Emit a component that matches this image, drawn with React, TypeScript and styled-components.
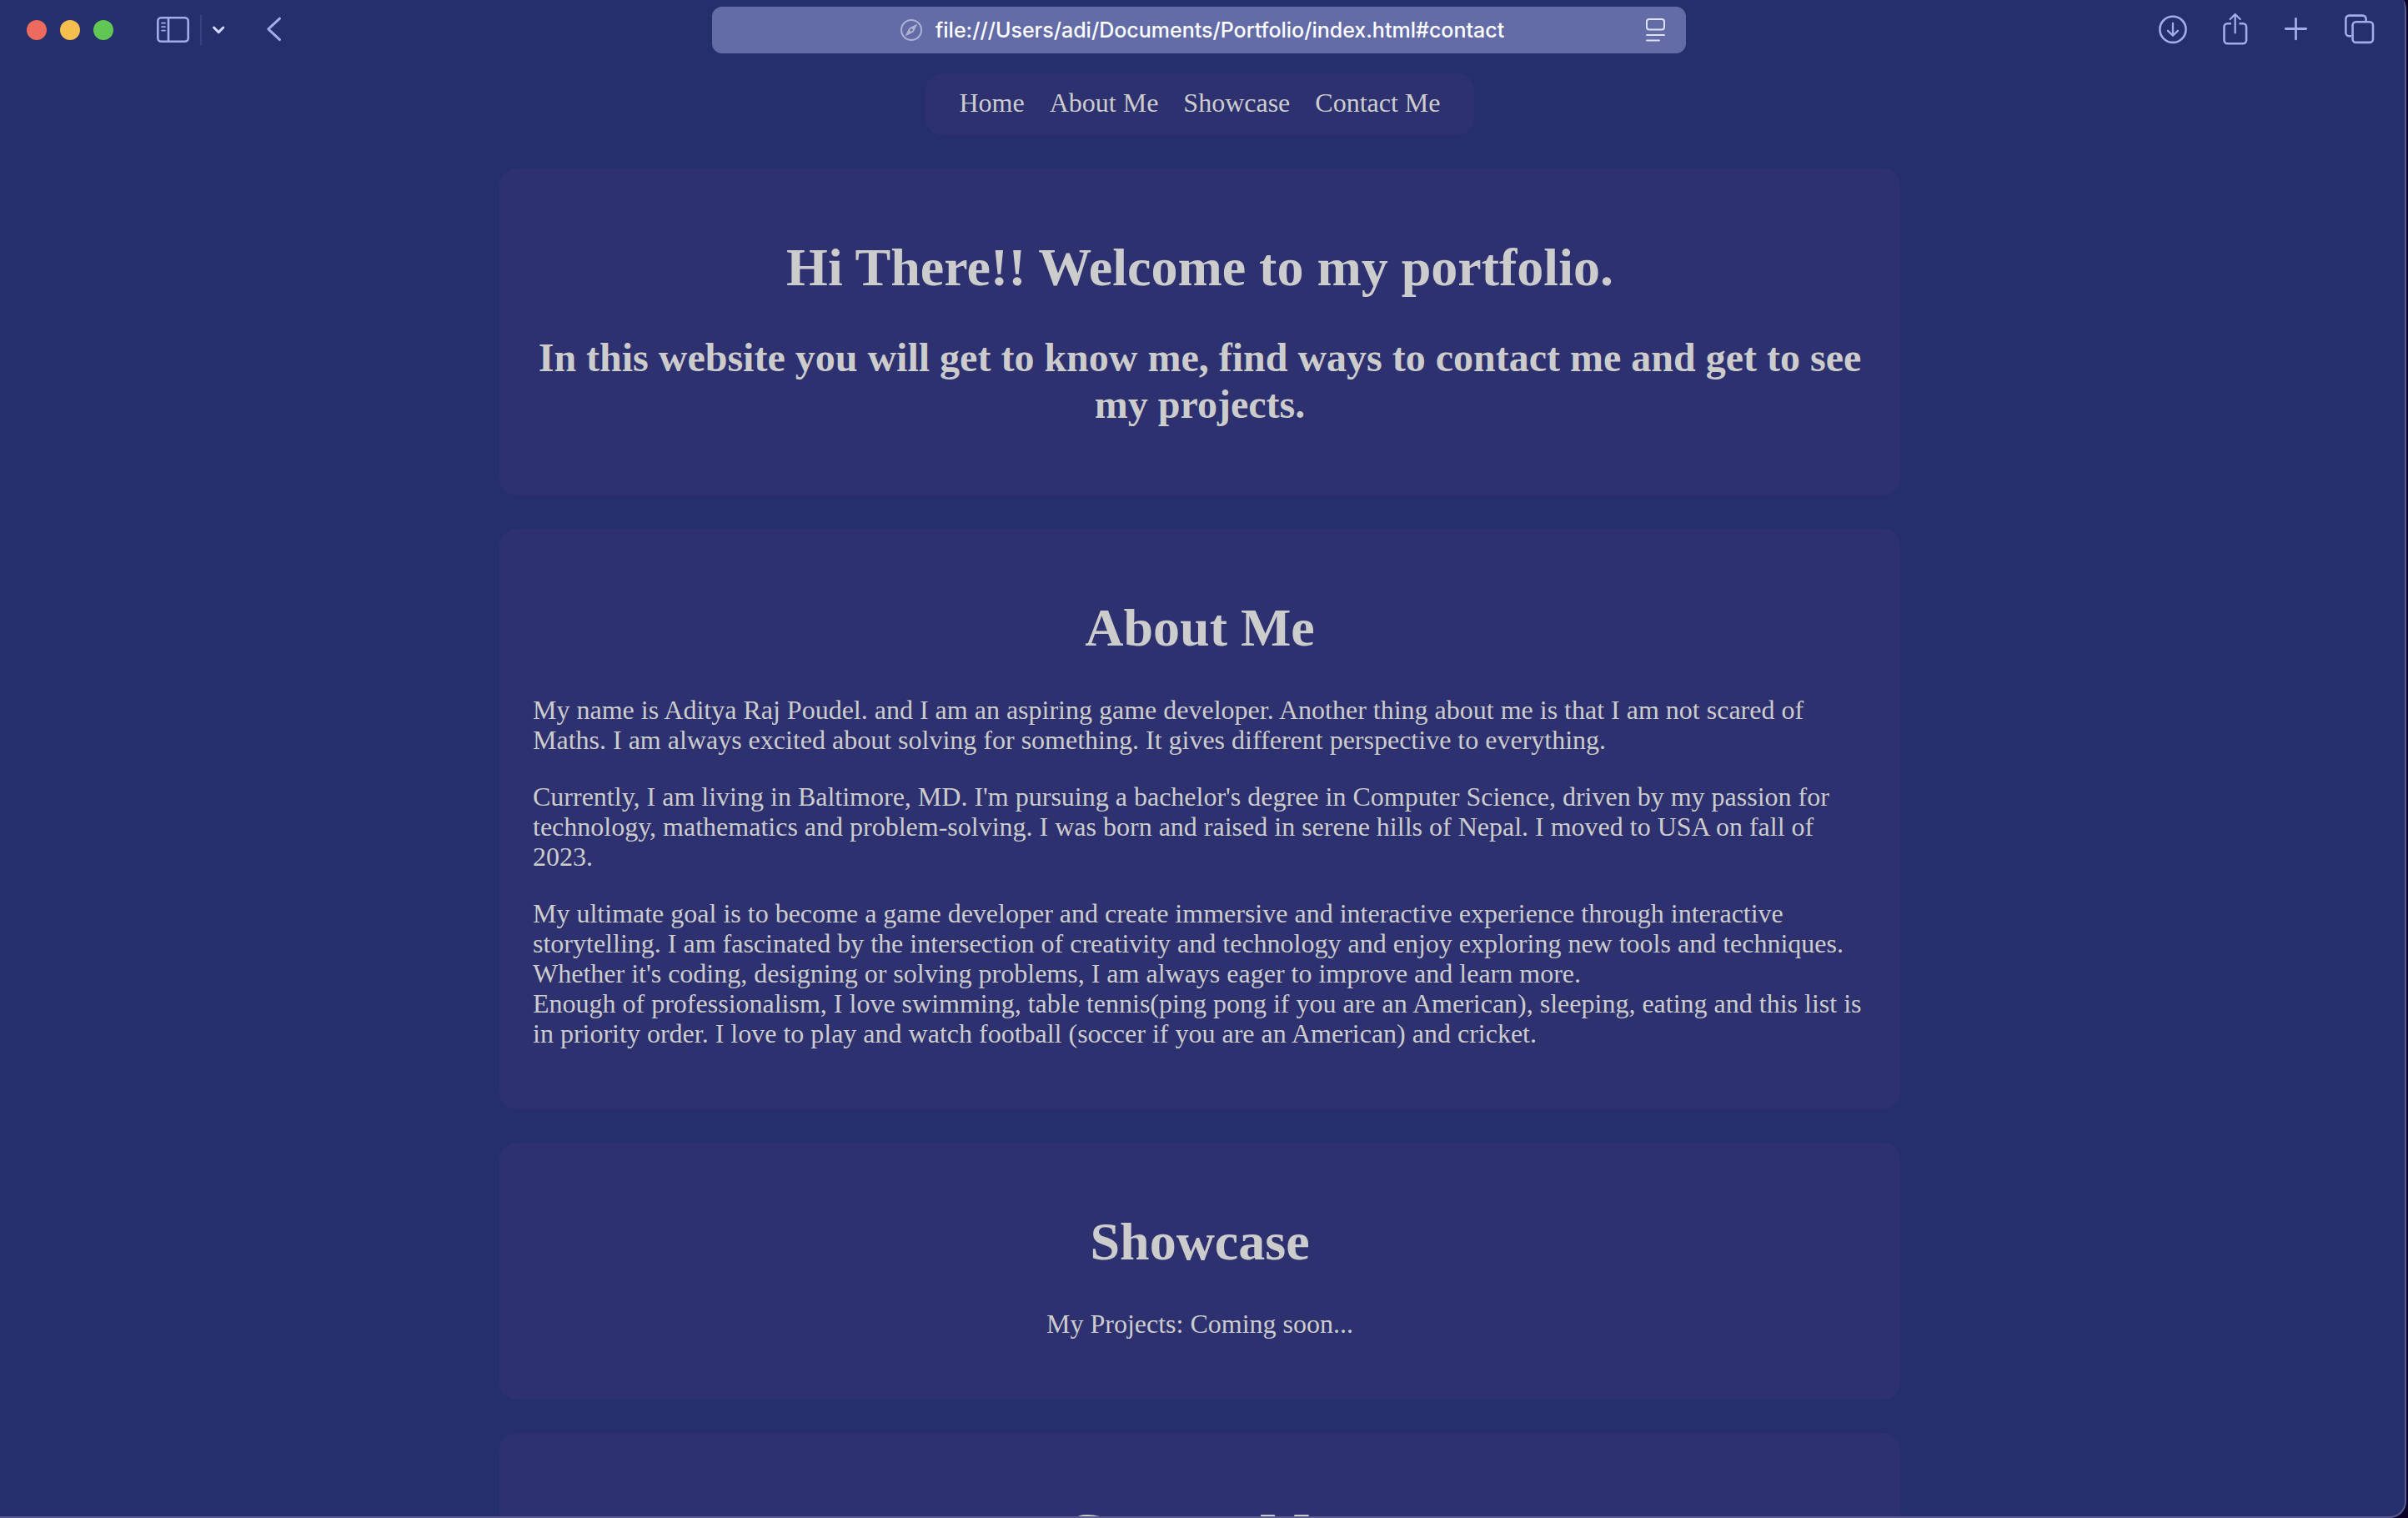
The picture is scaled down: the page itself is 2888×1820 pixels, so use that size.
import React from "react";
import styled, { createGlobalStyle } from "styled-components";

const colors = {
  desktop: "#0b0128",
  page: "#252f6b",
  card: "#2e3170",
  edge: "#5a5c8f",
  text: "#cccccc",
  icon: "#a3abe8",
  iconBright: "#d3d8ff",
  field: "#646ca8",
};

const GlobalStyle = createGlobalStyle`
  * { box-sizing: border-box; }
  html, body { margin: 0; background: ${colors.desktop}; }
`;

const Window = styled.div`
  display: flex;
  flex-direction: column;
  height: 100vh;
  margin-right: 2px;
  overflow: hidden;
  background: ${colors.page};
  border: solid ${colors.edge};
  border-width: 0 2px 2px 0;
  border-radius: 0 4px 20px 0 / 0 14px 20px 0;
`;

const Toolbar = styled.header`
  display: grid;
  grid-template-columns: 1fr minmax(0, 1168px) 1fr;
  align-items: center;
  flex: none;
  height: 72px;
  padding: 0 36px 0 28px;
`;

const LeftTools = styled.div`
  display: flex;
  align-items: center;
`;

const Lights = styled.div`
  display: flex;
  gap: 16px;
  margin: 0 52px 0 4px;
`;

const Light = styled.button<{ $color: string }>`
  width: 24px;
  height: 24px;
  padding: 0;
  border: 0;
  border-radius: 50%;
  background: ${(p) => p.$color};
`;

const Divider = styled.span`
  width: 2px;
  height: 36px;
  margin: 0 12px;
  background: #38417d;
`;

const ToolButton = styled.button<{ $width?: number; $bright?: boolean }>`
  display: block;
  flex: none;
  width: ${(p) => p.$width ?? 36}px;
  height: 40px;
  padding: 0;
  border: 0;
  background: none;
  color: ${(p) => (p.$bright ? colors.iconBright : colors.icon)};

  svg {
    display: block;
    width: 100%;
    height: 100%;
    overflow: visible;
    fill: none;
    stroke: currentColor;
    stroke-width: 2.6;
    stroke-linecap: round;
    stroke-linejoin: round;
  }
`;

const BackSlot = styled.div`
  margin-left: 48px;
`;

const RightTools = styled.div`
  display: flex;
  justify-content: flex-end;
  gap: 39px;
`;

const AddressBar = styled.div`
  display: grid;
  grid-template-columns: 56px minmax(0, 1fr) 48px;
  align-items: center;
  height: 56px;
  border-radius: 12px;
  background: ${colors.field};
`;

const Address = styled.label`
  grid-column: 2;
  display: flex;
  align-items: center;
  justify-content: center;
  gap: 16px;
  min-width: 0;
`;

const CompassIcon = styled.svg`
  flex: none;
  width: 26px;
  height: 26px;
  fill: none;
  stroke: #aeb3d6;
  stroke-width: 2;
`;

const AddressInput = styled.input`
  field-sizing: content;
  min-width: 0;
  padding: 0;
  border: 0;
  outline: 0;
  background: none;
  color: #ffffff;
  font: 500 25px/32px Inter, "Liberation Sans", sans-serif;
`;

const ReaderButton = styled.button`
  width: 24px;
  height: 28px;
  padding: 0;
  border: 0;
  background: none;

  svg {
    display: block;
    fill: none;
    stroke: #dfe1f1;
    stroke-width: 2;
    stroke-linecap: round;
  }
`;

const Page = styled.div`
  display: flex;
  flex: 1;
  flex-direction: column;
  align-items: center;
  gap: 40px;
  min-height: 0;
  padding: 16px 6px 40px 0;
  overflow-y: auto;
  scrollbar-width: none;
  color: ${colors.text};
  font-family: "Liberation Serif", "Times New Roman", serif;
  font-size: 32px;
  line-height: 36px;
`;

const Nav = styled.nav`
  display: flex;
  flex: none;
  gap: 30px;
  padding: 17px 40px 21px;
  border-radius: 20px;
  background: ${colors.card};
`;

const NavLink = styled.a`
  color: inherit;
  text-decoration: none;
`;

const Main = styled.main`
  display: flex;
  flex: none;
  flex-direction: column;
  gap: 40px;
  width: 100%;
  max-width: 1680px;
`;

const Card = styled.section<{ $centered?: boolean }>`
  display: flow-root;
  padding: 39px 40px 41px;
  border-radius: 20px;
  background: ${colors.card};
  text-align: ${(p) => (p.$centered ? "center" : "left")};
`;

const Title = styled.h1`
  margin: 43px 0;
  font-size: 64px;
  line-height: 74px;
  text-align: center;
`;

const Subtitle = styled.h2`
  margin: 40px 0;
  font-size: 48px;
  line-height: 56px;
`;

const Paragraph = styled.p`
  margin: 32px 0;
`;

export default function App() {
  return (
    <>
      <GlobalStyle />
      <Window>
        <Toolbar>
          <LeftTools>
            <Lights>
              <Light $color="#ec6a5e" aria-label="Close" />
              <Light $color="#f5bf4f" aria-label="Minimize" />
              <Light $color="#62c655" aria-label="Zoom" />
            </Lights>
            <ToolButton $width={40} aria-label="Sidebar">
              <svg viewBox="0 0 40 40">
                <rect x="1.3" y="5.3" width="36.4" height="28.4" rx="4" />
                <path d="M14 5.3v28.4" />
                <path d="M6 11.7h4M6 16.2h4M6 20.6h4" strokeWidth="1.8" />
              </svg>
            </ToolButton>
            <Divider />
            <ToolButton $width={16} $bright aria-label="Tab groups">
              <svg viewBox="0 0 16 40">
                <path d="M2.5 17l5.7 5.6L13.8 17" strokeWidth="3" />
              </svg>
            </ToolButton>
            <BackSlot>
              <ToolButton $width={20} aria-label="Back">
                <svg viewBox="0 0 20 40">
                  <path d="M17.5 6.2L3.8 18.8l13.7 12.8" strokeWidth="3" />
                </svg>
              </ToolButton>
            </BackSlot>
          </LeftTools>

          <AddressBar>
            <Address>
              <CompassIcon viewBox="0 0 26 26" aria-hidden="true">
                <circle cx="13" cy="13" r="12" />
                <path
                  d="M19.6 6.4l-4.4 8.8-8.8 4.4 4.4-8.8z"
                  fill="#aeb3d6"
                  strokeWidth="1"
                  strokeLinejoin="round"
                />
                <circle cx="13" cy="13" r="1.7" fill={colors.field} stroke="none" />
              </CompassIcon>
              <AddressInput
                aria-label="Address"
                defaultValue="file:///Users/adi/Documents/Portfolio/index.html#contact"
              />
            </Address>
            <ReaderButton aria-label="Reader">
              <svg viewBox="0 0 24 28" width="24" height="28">
                <rect x="1" y="1" width="21" height="12.5" rx="3" />
                <path d="M1 20h21M1 26.5h15" />
              </svg>
            </ReaderButton>
          </AddressBar>

          <RightTools>
            <ToolButton aria-label="Downloads">
              <svg viewBox="0 0 36 40">
                <circle cx="19" cy="19.3" r="15.6" />
                <path d="M19 11.8v14.6M13 20.8l6 5.8 6-5.8" strokeWidth="2.3" />
              </svg>
            </ToolButton>
            <ToolButton aria-label="Share">
              <svg viewBox="0 0 36 40">
                <path
                  d="M14 12.2H9.5a4 4 0 0 0-4 4v16a4 4 0 0 0 4 4h18.6a4 4 0 0 0 4-4v-16a4 4 0 0 0-4-4h-4.6"
                  strokeLinecap="butt"
                />
                <path d="M18.7 1.2v22.2M12.7 7l6-5.8 6 5.8" strokeWidth="2.3" />
              </svg>
            </ToolButton>
            <ToolButton aria-label="New tab">
              <svg viewBox="0 0 36 40">
                <path d="M16.5 6.5v24.4M4.3 18.5h24.4" strokeWidth="2.8" />
              </svg>
            </ToolButton>
            <ToolButton aria-label="Tab overview">
              <svg viewBox="0 0 36 40">
                <rect x="9.6" y="10.3" width="24.4" height="24.6" rx="4" />
                <path
                  d="M8.2 27.2H5.4a4 4 0 0 1-4-4V6.6a4 4 0 0 1 4-4h16.2a4 4 0 0 1 4 4v2.6"
                  strokeLinecap="butt"
                />
              </svg>
            </ToolButton>
          </RightTools>
        </Toolbar>

        <Page>
          <Nav>
            <NavLink href="#home">Home</NavLink>
            <NavLink href="#about">About Me</NavLink>
            <NavLink href="#showcase">Showcase</NavLink>
            <NavLink href="#contact">Contact Me</NavLink>
          </Nav>

          <Main>
            <Card id="home" $centered>
              <Title>Hi There!! Welcome to my portfolio.</Title>
              <Subtitle>
                In this website you will get to know me, find ways to contact me and get to see my
                projects.
              </Subtitle>
            </Card>

            <Card id="about">
              <Title>About Me</Title>
              <Paragraph>
                My name is Aditya Raj Poudel. and I am an aspiring game developer. Another thing
                about me is that I am not scared of Maths. I am always excited about solving for
                something. It gives different perspective to everything.
              </Paragraph>
              <Paragraph>
                Currently, I am living in Baltimore, MD. I'm pursuing a bachelor's degree in
                Computer Science, driven by my passion for technology, mathematics and
                problem-solving. I was born and raised in serene hills of Nepal. I moved to USA on
                fall of 2023.
              </Paragraph>
              <Paragraph>
                My ultimate goal is to become a game developer and create immersive and interactive
                experience through interactive storytelling. I am fascinated by the intersection of
                creativity and technology and enjoy exploring new tools and techniques. Whether it's
                coding, designing or solving problems, I am always eager to improve and learn more.
                <br />
                Enough of professionalism, I love swimming, table tennis(ping pong if you are an
                American), sleeping, eating and this list is in priority order. I love to play and
                watch football (soccer if you are an American) and cricket.
              </Paragraph>
            </Card>

            <Card id="showcase" $centered>
              <Title>Showcase</Title>
              <Paragraph>My Projects: Coming soon...</Paragraph>
            </Card>

            <Card id="contact" $centered>
              <Title>Contact Me</Title>
            </Card>
          </Main>
        </Page>
      </Window>
    </>
  );
}
